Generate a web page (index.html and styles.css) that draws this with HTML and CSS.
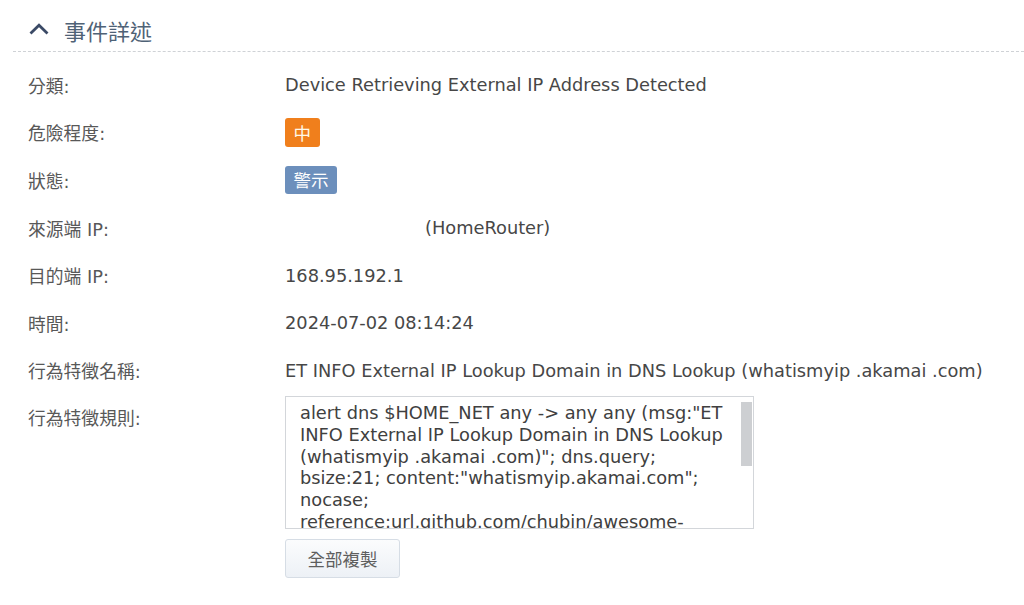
FILE: index.html
```html
<!DOCTYPE html>
<html lang="zh-Hant">
<head>
<meta charset="utf-8">
<link rel="stylesheet" href="styles.css">
</head>
<body>
<div class="panel">
  <div class="section-head">
    <svg class="chev" width="20" height="12" viewBox="0 0 20 12"><path d="M1.5 10.5 L10 2.3 L18.5 10.5" fill="none" stroke="#3b4a66" stroke-width="2.8"/></svg>
    <span class="title">事件詳述</span>
  </div>
  <div class="rows">
    <div class="row"><div class="label">分類:</div><div class="value">Device Retrieving External IP Address Detected</div></div>
    <div class="row"><div class="label">危險程度:</div><div class="value"><span class="badge badge-mid">中</span></div></div>
    <div class="row"><div class="label">狀態:</div><div class="value"><span class="badge badge-warn">警示</span></div></div>
    <div class="row"><div class="label">來源端 IP:</div><div class="value"><span class="masked"></span>(HomeRouter)</div></div>
    <div class="row"><div class="label">目的端 IP:</div><div class="value">168.95.192.1</div></div>
    <div class="row"><div class="label">時間:</div><div class="value">2024-07-02 08:14:24</div></div>
    <div class="row"><div class="label">行為特徵名稱:</div><div class="value">ET INFO External IP Lookup Domain in DNS Lookup (whatismyip .akamai .com)</div></div>
    <div class="row row-rule"><div class="label">行為特徵規則:</div>
      <div class="value">
        <div class="rulewrap">
          <textarea class="rulebox" readonly>alert dns $HOME_NET any -&gt; any any (msg:"ET INFO External IP Lookup Domain in DNS Lookup (whatismyip .akamai .com)"; dns.query; bsize:21; content:"whatismyip.akamai.com"; nocase; reference:url,github.com/chubin/awesome-console-services; classtype:policy-violation; sid:2033405; rev:2;)</textarea>
          <div class="scroll-thumb"></div>
        </div>
        <button class="copy-btn">全部複製</button>
      </div>
    </div>
  </div>
</div>
</body>
</html>
```
FILE: styles.css
```css
html, body {
  margin: 0;
  padding: 0;
  background: #ffffff;
}
body {
  font-family: "DejaVu Sans", "Noto Sans CJK TC", sans-serif;
  color: #444;
  width: 1024px;
  height: 605px;
  overflow: hidden;
}
.panel {
  padding: 0 0 0 13px;
}
.section-head {
  display: flex;
  align-items: center;
  height: 52px;
  border-bottom: 1px dashed #cfd2d6;
  padding-left: 16px;
  box-sizing: border-box;
  padding-top: 9px;
}
.chev {
  display: block;
  margin-right: 15px;
  margin-top: -2px;
}
.title {
  font-family: "Noto Sans CJK TC", sans-serif;
  font-size: 22px;
  color: #4f6276;
  line-height: 30px;
}
.rows {
  padding-left: 15px;
  padding-top: 9px;
}
.row {
  display: flex;
  align-items: center;
  height: 47.6px;
}
.label {
  width: 257px;
  flex: none;
  font-size: 17.8px;
  color: #585858;
}
.value {
  font-size: 17.8px;
  color: #474747;
  white-space: nowrap;
}
.badge {
  display: inline-block;
  vertical-align: middle;
  font-family: "Noto Sans CJK TC", sans-serif;
  font-size: 17.5px;
  color: #fff;
  border-radius: 3px;
  height: 29px;
  line-height: 29px;
  padding: 0 8.5px;
}
.badge-mid {
  background: #f07f1c;
  color: #fff8e8;
}
.badge-warn {
  background: #6c8fbc;
  height: 28px;
  line-height: 28px;
}
.masked {
  display: inline-block;
  width: 140px;
}
.row-rule {
  align-items: flex-start;
  height: auto;
}
.row-rule .label {
  padding-top: 10px;
}
.row-rule .value {
  white-space: normal;
}
.rulewrap {
  position: relative;
  width: 469px;
  margin-top: 2px;
}
.rulebox {
  display: block;
  width: 469px;
  height: 133px;
  margin: 0;
  border: 1px solid #d3d6da;
  border-radius: 0;
  box-sizing: border-box;
  padding: 5px 12px 0 14px;
  font-family: "DejaVu Sans", "Noto Sans CJK TC", sans-serif;
  font-size: 17.8px;
  line-height: 21.7px;
  color: #404040;
  background: #fff;
  resize: none;
  outline: none;
  overflow-y: hidden;
  scrollbar-width: none;
}
.scroll-thumb {
  position: absolute;
  right: 2px;
  top: 6px;
  width: 11px;
  height: 64px;
  background: #cdcfd2;
}
.copy-btn {
  display: block;
  margin-top: 10px;
  width: 115px;
  height: 39px;
  border: 1px solid #d6dde5;
  border-radius: 3px;
  background: linear-gradient(#fbfcfd, #edf1f6);
  font-family: "Noto Sans CJK TC", sans-serif;
  font-size: 17.5px;
  color: #5e5e5e;
  padding: 0;
}
```
